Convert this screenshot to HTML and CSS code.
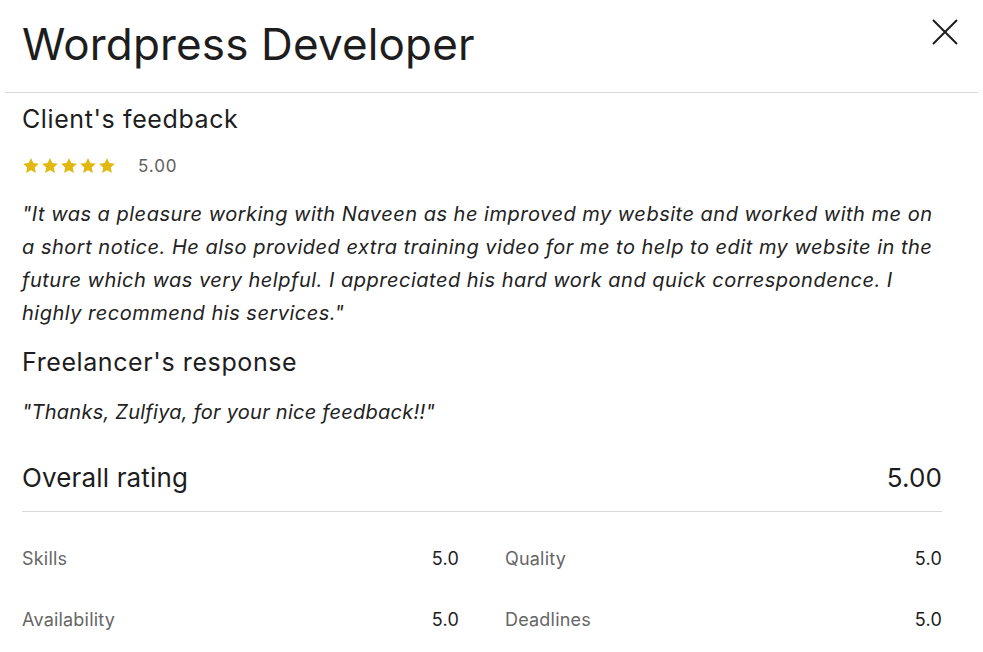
FILE: index.html
```html
<!DOCTYPE html>
<html>
<head>
<meta charset="utf-8">
<link rel="stylesheet" href="styles.css">
</head>
<body>
<div class="modal">
  <header class="head">
    <h1 class="title">Wordpress Developer</h1>
    <button class="close" aria-label="Close">
      <svg width="26" height="26" viewBox="0 0 26 26"><path d="M1 1L25 25M25 1L1 25" stroke="#1d1d1d" stroke-width="2" fill="none"/></svg>
    </button>
  </header>
  <section class="body">
    <h2 class="sec">Client's feedback</h2>
    <div class="rating">
      <div class="stars">
        <svg viewBox="0 0 20 20"><path d="M10 1.2l2.6 5.6 6.1.7-4.5 4.2 1.2 6.1L10 14.8l-5.4 3 1.2-6.1L1.3 7.5l6.1-.7z" fill="#e1b80f"/></svg>
        <svg viewBox="0 0 20 20"><path d="M10 1.2l2.6 5.6 6.1.7-4.5 4.2 1.2 6.1L10 14.8l-5.4 3 1.2-6.1L1.3 7.5l6.1-.7z" fill="#e1b80f"/></svg>
        <svg viewBox="0 0 20 20"><path d="M10 1.2l2.6 5.6 6.1.7-4.5 4.2 1.2 6.1L10 14.8l-5.4 3 1.2-6.1L1.3 7.5l6.1-.7z" fill="#e1b80f"/></svg>
        <svg viewBox="0 0 20 20"><path d="M10 1.2l2.6 5.6 6.1.7-4.5 4.2 1.2 6.1L10 14.8l-5.4 3 1.2-6.1L1.3 7.5l6.1-.7z" fill="#e1b80f"/></svg>
        <svg viewBox="0 0 20 20"><path d="M10 1.2l2.6 5.6 6.1.7-4.5 4.2 1.2 6.1L10 14.8l-5.4 3 1.2-6.1L1.3 7.5l6.1-.7z" fill="#e1b80f"/></svg>
      </div>
      <span class="score">5.00</span>
    </div>
    <p class="quote">"It was a pleasure working with Naveen as he improved my website and worked with me on a short notice. He also provided extra training video for me to help to edit my website in the future which was very helpful. I appreciated his hard work and quick correspondence. I highly recommend his services."</p>
    <h2 class="sec sec2">Freelancer's response</h2>
    <p class="quote q2">"Thanks, Zulfiya, for your nice feedback!!"</p>
    <div class="overall">
      <span>Overall rating</span>
      <span>5.00</span>
    </div>
    <div class="grid">
      <div class="item"><span class="lab">Skills</span><span class="val">5.0</span></div>
      <div class="item"><span class="lab">Quality</span><span class="val">5.0</span></div>
      <div class="item"><span class="lab">Availability</span><span class="val">5.0</span></div>
      <div class="item"><span class="lab">Deadlines</span><span class="val">5.0</span></div>
    </div>
  </section>
</div>
</body>
</html>
```
FILE: styles.css
```css
* { box-sizing: border-box; }
html, body { margin: 0; padding: 0; background: #fff; }
body { font-family: Inter, "Liberation Sans", Arial, sans-serif; color: #1d1d1d; }
.modal { width: 983px; }
.head {
  margin: 0 5px;
  height: 93px;
  border-bottom: 1px solid #d9d9d9;
  display: flex;
  justify-content: space-between;
  align-items: flex-start;
  padding: 0 20px 0 17px;
}
.title { margin: 18px 0 0; font-size: 44px; font-weight: 400; line-height: 52px; letter-spacing: 0.15px; }
.close { margin-top: 19px; border: 0; background: none; padding: 0; width: 26px; height: 26px; cursor: pointer; }
.close svg { display: block; }
.body { padding: 0 41px 0 22px; }
.sec { margin: 10px 0 0; font-size: 25px; font-weight: 400; line-height: 32px; letter-spacing: 0.6px; }
.sec2 { margin-top: 16px; }
.rating { display: flex; align-items: center; margin-top: 20px; height: 22px; }
.stars { display: flex; gap: 1px; }
.stars svg { width: 18px; height: 18px; display: block; }
.score { margin-left: 22px; font-size: 17px; letter-spacing: 0.9px; color: #5e5e5e; }
.quote { margin: 21px 0 0; font-size: 20px; font-style: italic; line-height: 33px; letter-spacing: 0.5px; color: #222; }
.q2 { margin-top: 18px; letter-spacing: 0.25px; }
.overall { display: flex; justify-content: space-between; align-items: center; margin-top: 33px; padding-bottom: 17px; border-bottom: 1px solid #d9d9d9; font-size: 26px; line-height: 32px; letter-spacing: 0.15px; }
.grid { display: grid; grid-template-columns: 1fr 1fr; column-gap: 46px; row-gap: 40px; margin-top: 36px; }
.item { display: flex; justify-content: space-between; font-size: 18px; line-height: 21px; letter-spacing: 0.2px; }
.lab { color: #666; }
.val { color: #1d1d1d; }
```
